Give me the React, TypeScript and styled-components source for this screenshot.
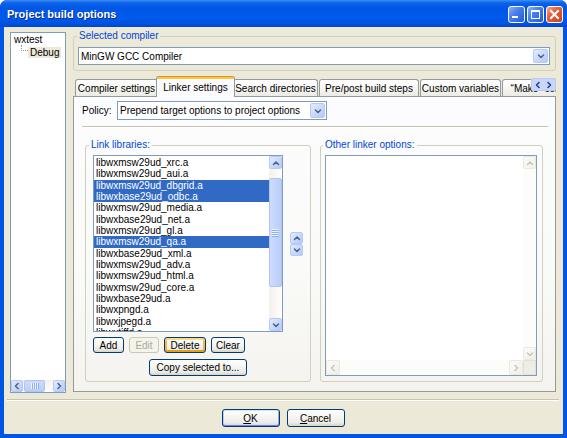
import React from "react";
import styled, { createGlobalStyle, css } from "styled-components";

const Global = createGlobalStyle`
  html, body { margin: 0; padding: 0; background: #ffffff; }
  body { font-family: "Liberation Sans", Arial, sans-serif; font-size: 10px; color: #000; }
  * { box-sizing: border-box; }
`;

/* ---------- window chrome ---------- */
const Window = styled.div`
  width: 567px;
  height: 438px;
  display: flex;
  flex-direction: column;
  background: #0055e5;
  border-radius: 7px 7px 0 0;
  overflow: hidden;
`;

const TitleBar = styled.div`
  flex: none;
  height: 27px;
  display: flex;
  align-items: center;
  padding: 0 4px 0 7px;
  background: linear-gradient(
    to bottom,
    #3d8ef6 0px,
    #0b62e8 3px,
    #0057e6 8px,
    #005aeb 18px,
    #0052df 24px,
    #0046d0 27px
  );
`;

const TitleText = styled.div`
  flex: 1;
  color: #ffffff;
  font-weight: bold;
  font-size: 11px;
  text-shadow: 1px 1px 0 #0a2a8a;
  padding-top: 1px;
`;

const TitleButtons = styled.div`
  display: flex;
  gap: 2px;
  padding-top: 1px;
`;

const CaptionBtn = styled.div<{ $red?: boolean }>`
  width: 17px;
  height: 17px;
  border: 1px solid #ffffff;
  border-radius: 3px;
  display: flex;
  align-items: center;
  justify-content: center;
  background: ${(p) =>
    p.$red
      ? "linear-gradient(135deg, #f4ab90 0%, #e5603a 40%, #c8401c 100%)"
      : "linear-gradient(135deg, #8db2f7 0%, #4a7ff0 40%, #2559d8 100%)"};
`;

const Frame = styled.div`
  flex: 1;
  margin: 0 4px 4px;
  background: #ece9d8;
  display: flex;
  flex-direction: column;
  padding: 3px 7px 7px 6px;
`;

const MainRow = styled.div`
  flex: none;
  height: 363px;
  display: flex;
  gap: 7px;
`;

/* ---------- tree ---------- */
const Tree = styled.div`
  flex: none;
  width: 56px;
  margin-top: 2px;
  background: #ffffff;
  border: 1px solid #7f9db9;
  display: flex;
  flex-direction: column;
`;

const TreeBody = styled.div`
  flex: 1;
  padding: 1px 0 0 3px;
`;

const TreeRow = styled.div`
  height: 12px;
  line-height: 12px;
  display: flex;
  align-items: flex-start;
  white-space: nowrap;
`;

const TreeChildRow = styled(TreeRow)`
  margin-left: 7px;
  height: 12px;
`;

const Connector = styled.span`
  flex: none;
  width: 7px;
  height: 6px;
  margin-top: -1px;
  border-left: 1px dotted #9a9a9a;
  border-bottom: 1px dotted #9a9a9a;
`;

const TreeLabelSel = styled.span`
  background: #ece9d8;
  padding: 0 2px;
  line-height: 11px;
  margin-top: 1px;
`;

/* ---------- scrollbars ---------- */
const ScrollBtn = styled.div<{ $w: number; $h: number; $off?: boolean }>`
  flex: none;
  width: ${(p) => p.$w}px;
  height: ${(p) => p.$h}px;
  display: flex;
  align-items: center;
  justify-content: center;
  border-radius: 2px;
  border: 1px solid ${(p) => (p.$off ? "#ebe9df" : "#b7caf5")};
  background: ${(p) =>
    p.$off
      ? "linear-gradient(135deg, #fbfbf8, #f0efe8)"
      : "linear-gradient(135deg, #e3ebfe 0%, #c6d7fc 60%, #b4c8f6 100%)"};
`;

const VScroll = styled.div<{ $off?: boolean }>`
  display: flex;
  flex-direction: column;
  width: 13px;
  min-height: 0;
  background: ${(p) =>
    p.$off ? "#fcfcfa" : "linear-gradient(to right, #f3f1ec, #fefefb)"};
`;

const HScroll = styled.div<{ $off?: boolean; $h: number }>`
  display: flex;
  height: ${(p) => p.$h}px;
  flex: none;
  min-width: 0;
  background: ${(p) =>
    p.$off ? "#fcfcfa" : "linear-gradient(to bottom, #f3f1ec, #fefefb)"};
`;

const Track = styled.div<{ $vertical?: boolean }>`
  flex: 1;
  display: flex;
  flex-direction: ${(p) => (p.$vertical ? "column" : "row")};
  min-height: 0;
  min-width: 0;
`;

const Thumb = styled.div<{ $vertical?: boolean; $start: number; $len: number }>`
  flex: none;
  display: flex;
  align-items: center;
  justify-content: center;
  border: 1px solid #b1c5f5;
  border-radius: 2px;
  ${(p) =>
    p.$vertical
      ? css`
          margin-top: ${p.$start}px;
          height: ${p.$len}px;
          background: linear-gradient(to right, #cedcfd, #bacdf9);
        `
      : css`
          margin-left: ${p.$start}px;
          width: ${p.$len}px;
          background: linear-gradient(to bottom, #cedcfd, #bacdf9);
        `}
`;

const Grip = styled.div<{ $vertical?: boolean }>`
  ${(p) =>
    p.$vertical
      ? css`
          width: 7px;
          height: 8px;
          background: repeating-linear-gradient(
            to bottom,
            #eef4fe 0 1px,
            #8cb0f8 1px 2px
          );
        `
      : css`
          width: 8px;
          height: 6px;
          background: repeating-linear-gradient(
            to right,
            #eef4fe 0 1px,
            #8cb0f8 1px 2px
          );
        `}
`;

const Corner = styled.div`
  background: #eeede5;
  border: 1px solid #e2e0d4;
`;

type Dir = "up" | "down" | "left" | "right";
const chevronPaths: Record<Dir, string> = {
  up: "M1.5 5.5 L4 3 L6.5 5.5",
  down: "M1.5 3 L4 5.5 L6.5 3",
  left: "M5 1.5 L2.5 4 L5 6.5",
  right: "M3 1.5 L5.5 4 L3 6.5",
};

const Chevron = ({ dir, color = "#4d6185" }: { dir: Dir; color?: string }) => (
  <svg width="8" height="8" viewBox="0 0 8 8">
    <path
      d={chevronPaths[dir]}
      fill="none"
      stroke={color}
      strokeWidth="1.5"
      strokeLinecap="round"
      strokeLinejoin="round"
    />
  </svg>
);

/* ---------- right column ---------- */
const RightCol = styled.div`
  flex: none;
  width: 483px;
  margin-bottom: 1px;
  display: flex;
  flex-direction: column;
`;

const Group = styled.fieldset<{ $pad: string }>`
  margin: 0;
  min-width: 0;
  border: 1px solid #d0d0bf;
  border-radius: 3px;
  padding: ${(p) => p.$pad};
  display: flex;
  flex-direction: column;
`;

const Legend = styled.legend<{ $shift: number }>`
  padding: 0 2px;
  margin-left: ${(p) => p.$shift}px;
  color: #0046d5;
  font-size: 10px;
  line-height: 12px;
`;

const Combo = styled.div<{ $w?: number; $h: number }>`
  flex: none;
  ${(p) => (p.$w ? `width: ${p.$w}px;` : "")}
  height: ${(p) => p.$h}px;
  display: flex;
  align-items: stretch;
  border: 1px solid #7f9db9;
  background: #ffffff;
`;

const ComboText = styled.div`
  flex: 1;
  display: flex;
  align-items: center;
  padding-left: 2px;
  white-space: nowrap;
  overflow: hidden;
`;

const DropBtn = styled.div`
  flex: none;
  width: 15px;
  margin: 1px;
  display: flex;
  align-items: center;
  justify-content: center;
  border-radius: 2px;
  border: 1px solid #b7caf5;
  background: linear-gradient(135deg, #e3ebfe 0%, #c6d7fc 60%, #b4c8f6 100%);
`;

const TabStrip = styled.div`
  position: relative;
  z-index: 1;
  margin-top: 5px;
  height: 21px;
  margin-bottom: -1px;
  flex: none;
  display: flex;
  align-items: flex-start;
  padding-left: 2px;
  overflow: hidden;
`;

const Tab = styled.div<{ $w: number; $active?: boolean }>`
  flex: none;
  width: ${(p) => p.$w}px;
  display: flex;
  align-items: center;
  justify-content: center;
  white-space: nowrap;
  overflow: hidden;
  border: 1px solid #919b9c;
  border-bottom: none;
  border-radius: 3px 3px 0 0;
  ${(p) =>
    p.$active
      ? css`
          height: 21px;
          margin: 0 -2px 0 -3px;
          border-top: none;
          padding-top: 2px;
          position: relative;
          background: linear-gradient(
            to bottom,
            #e68b2c 0 1px,
            #ffc83c 1px 3px,
            #fcfcfe 3px
          );
        `
      : css`
          height: 17px;
          margin: 3px 1px 0 0;
          background: linear-gradient(to bottom, #ffffff 0%, #f6f6f2 55%, #ebeae3 100%);
        `}
`;

const TabScroller = styled.div`
  position: absolute;
  right: 0;
  top: 2px;
  width: 25px;
  height: 13px;
  display: flex;
  background: #c8d7f8;
  border: 1px solid #b7caf5;
  border-radius: 2px;
`;

const TabScrollHalf = styled.div`
  flex: 1;
  display: flex;
  align-items: center;
  justify-content: center;
`;

const Panel = styled.div`
  flex: 1;
  border: 1px solid #919b9c;
  background: linear-gradient(to bottom, #fcfcfe 0%, #fafaf8 60%, #f4f3ee 100%);
  padding: 4px 7px 9px 8px;
  display: flex;
  flex-direction: column;
`;

const PolicyRow = styled.div`
  display: flex;
  align-items: center;
  height: 19px;
  flex: none;
`;

const PolicyLabel = styled.div`
  width: 35px;
  flex: none;
`;

const Separator = styled.div`
  flex: none;
  margin-top: 6px;
  height: 2px;
  border-top: 1px solid #c5c2b2;
  border-bottom: 1px solid #ffffff;
`;

const GroupsGrid = styled.div`
  flex: 1;
  margin: 11px 5px 0 3px;
  display: grid;
  grid-template-columns: 226px 1fr;
  gap: 9px;
`;

const ListRow = styled.div`
  display: flex;
  align-items: center;
  gap: 7px;
`;

const ListBox = styled.div<{ $w?: number; $h?: number }>`
  ${(p) => (p.$w ? `width: ${p.$w}px; flex: none;` : "flex: 1;")}
  ${(p) => (p.$h ? `height: ${p.$h}px;` : "")}
  border: 1px solid #7f9db9;
  background: #ffffff;
  display: grid;
  min-height: 0;
`;

const LinkListBox = styled(ListBox)`
  grid-template-columns: 1fr 13px;
`;

const OtherListBox = styled(ListBox)`
  grid-template-columns: 1fr 13px;
  grid-template-rows: 1fr 15px;
`;

const Items = styled.div`
  padding-top: 1px;
  overflow: hidden;
  min-width: 0;
`;

const Item = styled.div<{ $sel?: boolean }>`
  height: 11.33px;
  line-height: 11.33px;
  padding-left: 2px;
  white-space: nowrap;
  color: ${(p) => (p.$sel ? "#ffffff" : "#000000")};
  background: ${(p) => (p.$sel ? "#316ac5" : "transparent")};
`;

const Spin = styled.div`
  flex: none;
  width: 13px;
  height: 24px;
  display: flex;
  flex-direction: column;
`;

const BtnRow = styled.div`
  display: flex;
  gap: 5px;
  margin-top: 5px;
`;

type BtnState = "normal" | "focus" | "default" | "disabled";

const XPButton = styled.button<{ $w: number; $h: number; $state?: BtnState }>`
  flex: none;
  width: ${(p) => p.$w}px;
  height: ${(p) => p.$h}px;
  padding: 0;
  font-family: "Liberation Sans", Arial, sans-serif;
  font-size: 10px;
  color: #000000;
  border: 1px solid #003c74;
  border-radius: 3px;
  background: linear-gradient(to bottom, #ffffff 0%, #f5f5f1 45%, #ecebe6 80%, #d8d2c6 100%);
  ${(p) =>
    p.$state === "focus" &&
    css`
      box-shadow: inset 0 2px 0 #ffd98a, inset 0 -2px 0 #e5a01a,
        inset 2px 0 0 #f8b83e, inset -2px 0 0 #f8b83e;
    `}
  ${(p) =>
    p.$state === "default" &&
    css`
      box-shadow: inset 0 1px 0 #cee7ff, inset 0 -1px 0 #6982ee,
        inset 1px 0 0 #b8d0f8, inset -1px 0 0 #89ade4;
    `}
  ${(p) =>
    p.$state === "disabled" &&
    css`
      border-color: #c9c7ba;
      color: #aca899;
      background: #f5f4ea;
    `}
`;

const CopyButton = styled(XPButton)`
  align-self: center;
  margin-top: 6px;
`;

const Accel = styled.span`
  text-decoration: underline;
`;

const BottomSep = styled.div`
  flex: none;
  margin: 6px -3px 0;
  height: 2px;
  border-top: 1px solid #c5c2b2;
  border-bottom: 1px solid #ffffff;
`;

const ButtonBar = styled.div`
  margin-top: 8px;
  display: flex;
  justify-content: center;
  gap: 7px;
`;

/* ---------- data ---------- */
const libs: { name: string; sel?: boolean }[] = [
  { name: "libwxmsw29ud_xrc.a" },
  { name: "libwxmsw29ud_aui.a" },
  { name: "libwxmsw29ud_dbgrid.a", sel: true },
  { name: "libwxbase29ud_odbc.a", sel: true },
  { name: "libwxmsw29ud_media.a" },
  { name: "libwxbase29ud_net.a" },
  { name: "libwxmsw29ud_gl.a" },
  { name: "libwxmsw29ud_qa.a", sel: true },
  { name: "libwxbase29ud_xml.a" },
  { name: "libwxmsw29ud_adv.a" },
  { name: "libwxmsw29ud_html.a" },
  { name: "libwxmsw29ud_core.a" },
  { name: "libwxbase29ud.a" },
  { name: "libwxpngd.a" },
  { name: "libwxjpegd.a" },
  { name: "libwxtiffd.a" },
];

const tabs: { label: string; w: number; active?: boolean }[] = [
  { label: "Compiler settings", w: 83 },
  { label: "Linker settings", w: 79, active: true },
  { label: "Search directories", w: 85 },
  { label: "Pre/post build steps", w: 100 },
  { label: "Custom variables", w: 81 },
  { label: "\u201CMake\u201D commands", w: 100 },
];

export default function App() {
  return (
    <>
      <Global />
      <Window>
        <TitleBar>
          <TitleText>Project build options</TitleText>
          <TitleButtons>
            <CaptionBtn>
              <svg width="15" height="15" viewBox="0 0 15 15">
                <rect x="3" y="9" width="6" height="2" fill="#ffffff" />
              </svg>
            </CaptionBtn>
            <CaptionBtn>
              <svg width="15" height="15" viewBox="0 0 15 15">
                <rect x="3.5" y="3.5" width="8" height="8" fill="none" stroke="#ffffff" strokeWidth="1" />
                <rect x="3" y="3" width="9" height="2" fill="#ffffff" />
              </svg>
            </CaptionBtn>
            <CaptionBtn $red>
              <svg width="15" height="15" viewBox="0 0 15 15">
                <path d="M4 4 L11 11 M11 4 L4 11" stroke="#ffffff" strokeWidth="2" strokeLinecap="square" />
              </svg>
            </CaptionBtn>
          </TitleButtons>
        </TitleBar>

        <Frame>
          <MainRow>
            <Tree>
              <TreeBody>
                <TreeRow>wxtest</TreeRow>
                <TreeChildRow>
                  <Connector />
                  <TreeLabelSel>Debug</TreeLabelSel>
                </TreeChildRow>
              </TreeBody>
              <HScroll $h={12}>
                <ScrollBtn $w={12} $h={12}>
                  <Chevron dir="left" />
                </ScrollBtn>
                <Track>
                  <Thumb $start={1} $len={21}>
                    <Grip />
                  </Thumb>
                </Track>
                <ScrollBtn $w={12} $h={12}>
                  <Chevron dir="right" />
                </ScrollBtn>
              </HScroll>
            </Tree>

            <RightCol>
              <Group $pad="5px 5px 5px 4px">
                <Legend $shift={-1}>Selected compiler</Legend>
                <Combo $h={18}>
                  <ComboText>MinGW GCC Compiler</ComboText>
                  <DropBtn>
                    <Chevron dir="down" />
                  </DropBtn>
                </Combo>
              </Group>

              <TabStrip>
                {tabs.map((t) => (
                  <Tab key={t.label} $w={t.w} $active={t.active}>
                    {t.label}
                  </Tab>
                ))}
                <TabScroller>
                  <TabScrollHalf>
                    <Chevron dir="left" color="#1c3a8c" />
                  </TabScrollHalf>
                  <TabScrollHalf>
                    <Chevron dir="right" color="#1c3a8c" />
                  </TabScrollHalf>
                </TabScroller>
              </TabStrip>

              <Panel>
                <PolicyRow>
                  <PolicyLabel>Policy:</PolicyLabel>
                  <Combo $w={210} $h={19}>
                    <ComboText>Prepend target options to project options</ComboText>
                    <DropBtn>
                      <Chevron dir="down" />
                    </DropBtn>
                  </Combo>
                </PolicyRow>
                <Separator />

                <GroupsGrid>
                  <Group $pad="4px 7px 5px 7px">
                    <Legend $shift={-4}>Link libraries:</Legend>
                    <ListRow>
                      <LinkListBox $w={190} $h={177}>
                        <Items>
                          {libs.map((l) => (
                            <Item key={l.name} $sel={l.sel}>
                              {l.name}
                            </Item>
                          ))}
                        </Items>
                        <VScroll>
                          <ScrollBtn $w={13} $h={13}>
                            <Chevron dir="up" />
                          </ScrollBtn>
                          <Track $vertical>
                            <Thumb $vertical $start={9} $len={109}>
                              <Grip $vertical />
                            </Thumb>
                          </Track>
                          <ScrollBtn $w={13} $h={13}>
                            <Chevron dir="down" />
                          </ScrollBtn>
                        </VScroll>
                      </LinkListBox>
                      <Spin>
                        <ScrollBtn $w={13} $h={12}>
                          <Chevron dir="up" />
                        </ScrollBtn>
                        <ScrollBtn $w={13} $h={12}>
                          <Chevron dir="down" />
                        </ScrollBtn>
                      </Spin>
                    </ListRow>
                    <BtnRow>
                      <XPButton $w={31} $h={16}>Add</XPButton>
                      <XPButton $w={30} $h={16} $state="disabled">Edit</XPButton>
                      <XPButton $w={42} $h={16} $state="focus">Delete</XPButton>
                      <XPButton $w={34} $h={16}>Clear</XPButton>
                    </BtnRow>
                    <CopyButton $w={98} $h={17}>Copy selected to...</CopyButton>
                  </Group>

                  <Group $pad="4px 5px 5px 4px">
                    <Legend $shift={-2}>Other linker options:</Legend>
                    <OtherListBox>
                      <Items />
                      <VScroll $off>
                        <ScrollBtn $w={13} $h={13} $off>
                          <Chevron dir="up" color="#c9c7ba" />
                        </ScrollBtn>
                        <Track $vertical />
                        <ScrollBtn $w={13} $h={13} $off>
                          <Chevron dir="down" color="#c9c7ba" />
                        </ScrollBtn>
                      </VScroll>
                      <HScroll $off $h={15}>
                        <ScrollBtn $w={14} $h={15} $off>
                          <Chevron dir="left" color="#c9c7ba" />
                        </ScrollBtn>
                        <Track />
                        <ScrollBtn $w={14} $h={15} $off>
                          <Chevron dir="right" color="#c9c7ba" />
                        </ScrollBtn>
                      </HScroll>
                      <Corner />
                    </OtherListBox>
                  </Group>
                </GroupsGrid>
              </Panel>
            </RightCol>
          </MainRow>

          <BottomSep />
          <ButtonBar>
            <XPButton $w={58} $h={18} $state="default">
              <Accel>O</Accel>K
            </XPButton>
            <XPButton $w={58} $h={18}>
              <Accel>C</Accel>ancel
            </XPButton>
          </ButtonBar>
        </Frame>
      </Window>
    </>
  );
}
